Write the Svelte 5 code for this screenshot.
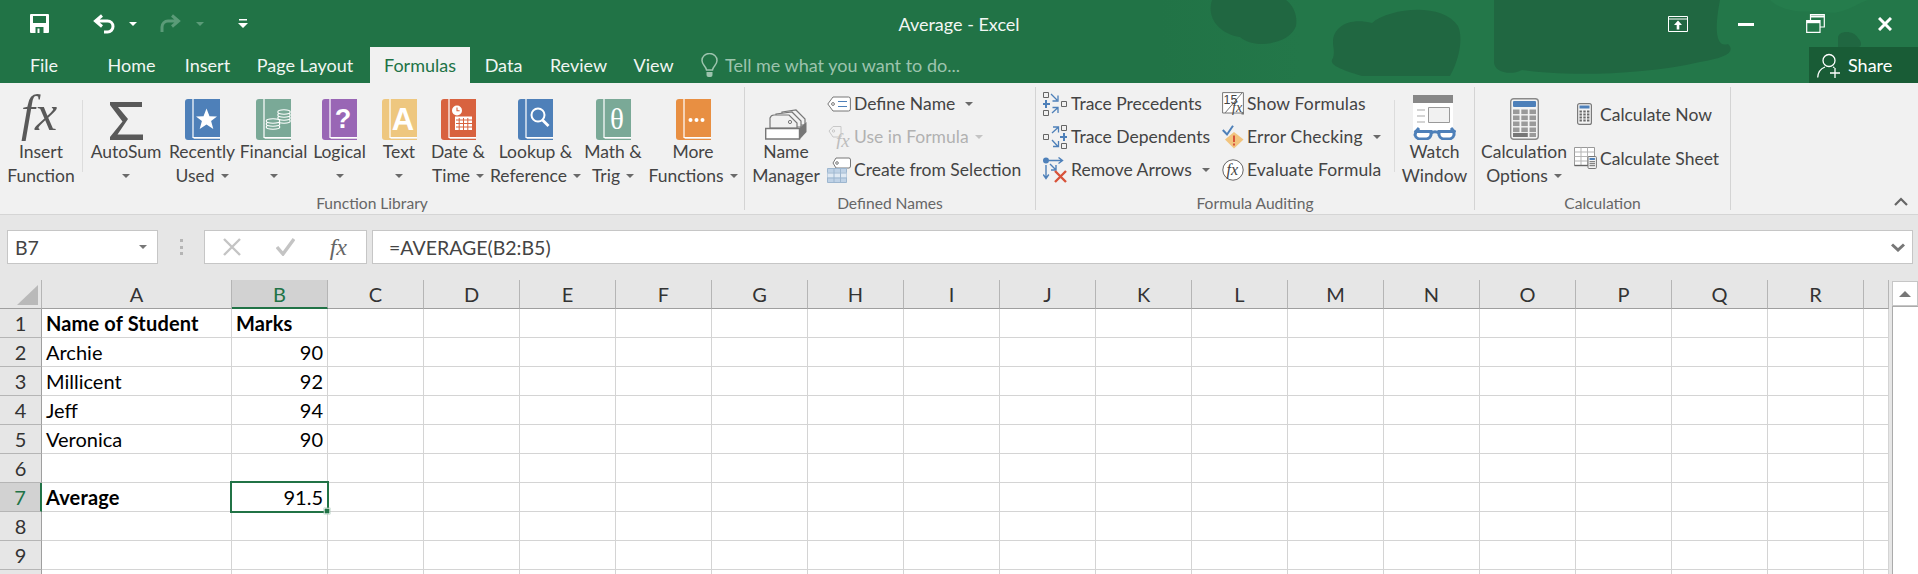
<script>
	const tabs = ['File', 'Home', 'Insert', 'Page Layout', 'Formulas', 'Data', 'Review', 'View'];

	const library = [
		{ top: 'AutoSum', bottom: '', icon: 'sum' },
		{ top: 'Recently', bottom: 'Used', icon: 'star', color: '#4e80b9' },
		{ top: 'Financial', bottom: '', icon: 'coins', color: '#7aa997' },
		{ top: 'Logical', bottom: '', icon: 'question', color: '#9966b5' },
		{ top: 'Text', bottom: '', icon: 'letter', color: '#eec77f' },
		{ top: 'Date &', bottom: 'Time', icon: 'date', color: '#d8623f' },
		{ top: 'Lookup &', bottom: 'Reference', icon: 'search', color: '#4e80b9' },
		{ top: 'Math &', bottom: 'Trig', icon: 'theta', color: '#7aa997' },
		{ top: 'More', bottom: 'Functions', icon: 'dots', color: '#e88f42' }
	];

	const columns = ['A', 'B', 'C', 'D', 'E', 'F', 'G', 'H', 'I', 'J', 'K', 'L', 'M', 'N', 'O', 'P', 'Q', 'R', ''];
	const rowNumbers = [1, 2, 3, 4, 5, 6, 7, 8, 9, 10];

	const cells = {
		A1: { text: 'Name of Student', bold: true },
		B1: { text: 'Marks', bold: true },
		A2: { text: 'Archie' },
		B2: { text: '90', right: true },
		A3: { text: 'Millicent' },
		B3: { text: '92', right: true },
		A4: { text: 'Jeff' },
		B4: { text: '94', right: true },
		A5: { text: 'Veronica' },
		B5: { text: '90', right: true },
		A7: { text: 'Average', bold: true },
		B7: { text: '91.5', right: true }
	};
</script>

{#snippet book(item)}
	<svg width="35" height="41" viewBox="0 0 35 41">
		<path d="M3 0H35V41H3Q0 41 0 38V3Q0 0 3 0Z" fill={item.color} />
		<path d="M8 0V38.5H35" fill="none" stroke="#fff" stroke-width="1.2" />
		<path d="M8.6 39.2H35V40H8.6Z" fill="#f1f1f1" />
		{#if item.icon === 'star'}
			<path d="M21.5 9.5L24.5 17.2L32 17.4L26.1 22.1L28.3 30L21.5 25.4L14.7 30L16.9 22.1L11 17.4L18.5 17.2Z" fill="#fff" />
		{:else if item.icon === 'coins'}
			<g fill={item.color} stroke="#fff" stroke-width="1.1">
				<ellipse cx="28" cy="22" rx="6.2" ry="2.2" />
				<ellipse cx="28" cy="19" rx="6.2" ry="2.2" />
				<ellipse cx="28" cy="16" rx="6.2" ry="2.2" />
				<ellipse cx="28" cy="13" rx="6.2" ry="2.2" />
				<ellipse cx="17" cy="28" rx="6.8" ry="2.2" />
				<ellipse cx="17" cy="25" rx="6.8" ry="2.2" />
				<ellipse cx="17" cy="22" rx="6.8" ry="2.2" />
			</g>
		{:else if item.icon === 'question'}
			<text x="21" y="29" class="glyph" font-size="27" font-weight="700" text-anchor="middle" fill="#fff">?</text>
		{:else if item.icon === 'letter'}
			<text x="21" y="31" class="glyph" font-size="31" font-weight="700" text-anchor="middle" fill="#fff">A</text>
		{:else if item.icon === 'date'}
			<circle cx="16" cy="11.5" r="5" fill="#fff" />
			<path d="M16 8.5V11.8H18.6" fill="none" stroke={item.color} stroke-width="1.1" />
			<path d="M14 17.5H31V31H14Z" fill="#fff" />
			<path d="M18.2 19V31M22.5 19V31M26.8 19V31M15 21H31M15 24.5H31M15 28H31" stroke={item.color} stroke-width="1" />
		{:else if item.icon === 'search'}
			<circle cx="20" cy="16" r="6.5" fill="none" stroke="#fff" stroke-width="2" />
			<path d="M24.5 21L30.5 27" stroke="#fff" stroke-width="2.8" />
		{:else if item.icon === 'theta'}
			<text x="21" y="30" class="serif" font-size="29" text-anchor="middle" fill="#fff">θ</text>
		{:else if item.icon === 'dots'}
			<circle cx="14.5" cy="21" r="2" fill="#fff" />
			<circle cx="20.5" cy="21" r="2" fill="#fff" />
			<circle cx="26.5" cy="21" r="2" fill="#fff" />
		{/if}
	</svg>
{/snippet}

<div class="excel">
	<header class="top">
		<svg class="backdrop" width="1918" height="83" viewBox="0 0 1918 83" aria-hidden="true">
			<defs>
				<linearGradient id="fade" x1="0" x2="1" y1="0" y2="0">
					<stop offset="0" stop-color="#237749" stop-opacity="0" />
					<stop offset="1" stop-color="#237749" stop-opacity="1" />
				</linearGradient>
			</defs>
			<rect x="1160" y="0" width="140" height="83" fill="url(#fade)" />
			<rect x="1300" y="0" width="618" height="83" fill="#237749" />
			<g fill="#206741">
				<path d="M1212 0C1206 18 1220 34 1240 37C1254 50 1290 44 1296 26C1298 14 1292 4 1286 0Z" />
				<path d="M1333 42C1333 26 1350 17 1372 23C1390 8 1442 2 1458 26C1464 40 1458 62 1450 76H1362C1350 72 1326 66 1333 58C1335 52 1333 48 1333 42Z" />
				<path d="M1494 0V62C1494 72 1510 76 1522 70C1560 76 1640 76 1700 62C1726 58 1736 52 1728 44C1716 48 1714 30 1720 0Z" />
				<path d="M1838 38C1838 30 1854 30 1858 38C1862 42 1862 47 1858 47H1838Z" />
			</g>
			<path d="M1770 0C1780 10 1800 14 1820 10C1840 20 1860 0 1870 0Z" fill="#257c4c" />
			<rect x="1300" y="76" width="618" height="7" fill="#237749" />
		</svg>

		<div class="titlebar">
			<div class="qat">
				<svg class="save" width="19" height="19" viewBox="0 0 19 19">
					<path d="M1 0H18Q19 0 19 1V18Q19 19 18 19H1Q0 19 0 18V1Q0 0 1 0Z" fill="#fff" />
					<path d="M3 2H16V9H3Z" fill="#217346" />
					<path d="M5.5 13H13.5V19H5.5Z" fill="#217346" />
					<path d="M7.5 14.5H9.5V19H7.5Z" fill="#fff" />
				</svg>
				<svg class="undo" width="22" height="20" viewBox="0 0 22 20">
					<path d="M9 1.5L2.5 7L9 12.5M3 7H14.5A5.5 5.5 0 0 1 14.5 18H11" fill="none" stroke="#fff" stroke-width="3" />
				</svg>
				<span class="qat-caret"></span>
				<svg class="redo" width="22" height="20" viewBox="0 0 22 20">
					<path d="M13 1.5L19.5 7L13 12.5M19 7H9A6 6 0 0 0 3 13V18" fill="none" stroke="#5b9b78" stroke-width="3" />
				</svg>
				<span class="qat-caret dim"></span>
				<svg class="customize" width="10" height="9" viewBox="0 0 10 9">
					<path d="M1 0H9V1.5H1ZM0 4H10L5 9Z" fill="#fff" />
				</svg>
			</div>
			<div class="title">Average - Excel</div>
			<div class="winctl">
				<svg width="20" height="16" viewBox="0 0 20 16">
					<path d="M.5 .5H19.5V15.5H.5ZM.5 3H19.5" fill="none" stroke="#fff" />
					<path d="M10 4.5L14 9H11.3V13.5H8.7V9H6Z" fill="#fff" />
				</svg>
				<svg class="minimize" width="16" height="3" viewBox="0 0 16 3"><rect width="16" height="3" fill="#fff" /></svg>
				<svg class="restore" width="19" height="19" viewBox="0 0 19 19">
					<path d="M4.5 6V.7H18.3V13H14" fill="none" stroke="#fff" stroke-width="1.2" />
					<path d="M4.5 2.5H18.3" stroke="#fff" stroke-width="2" />
					<path d="M.7 6.7H14V18.3H.7Z" fill="none" stroke="#fff" stroke-width="1.2" />
					<path d="M.7 8H14" stroke="#fff" stroke-width="2.4" />
				</svg>
				<svg class="close" width="14" height="14" viewBox="0 0 14 14">
					<path d="M1 1L13 13M13 1L1 13" stroke="#fff" stroke-width="3" />
				</svg>
			</div>
		</div>

		<nav class="tabs">
			<div class="tab-list">
				{#each tabs as tab}
					<span class="tab {tab === 'Formulas' ? 'active' : ''}">{tab}</span>
				{/each}
			</div>
			<div class="tell">
				<svg width="17" height="25" viewBox="0 0 17 25">
					<path d="M5.5 17C5 13 1 12 1 7.5A7.5 7 0 0 1 16 7.5C16 12 12 13 11.5 17Z" fill="none" stroke="#9dc4ae" stroke-width="1.5" />
					<path d="M5.5 19H11.5V22Q11.5 24 9.5 24H7.5Q5.5 24 5.5 22Z" fill="#9dc4ae" />
				</svg>
				<span>Tell me what you want to do...</span>
			</div>
			<div class="share">
				<svg width="24" height="25" viewBox="0 0 24 25">
					<circle cx="12" cy="7.5" r="6" fill="none" stroke="#fff" stroke-width="1.3" />
					<path d="M.7 24.5C1 19 4 15.5 8 14M16 14L17.5 14.7" fill="none" stroke="#fff" stroke-width="1.3" />
					<path d="M18 15V25M13 20H23" stroke="#fff" stroke-width="1.3" />
				</svg>
				<span>Share</span>
			</div>
		</nav>
	</header>

	<section class="ribbon">
		<div class="group library">
			<div class="group-body library-body">
				<div class="big">
					<div class="big-icon">
						<svg class="fx-icon" width="48" height="46" viewBox="0 0 48 46">
							<text x="4" y="36" class="serif italic" font-size="50" fill="#595959">fx</text>
						</svg>
					</div>
					<span class="label">Insert</span>
					<span class="label">Function</span>
				</div>
				<span class="short-sep"></span>
				{#each library as item}
					<div class="big">
						<div class="big-icon">
							{#if item.icon === 'sum'}
								<svg width="33" height="38" viewBox="0 0 33 38">
									<path d="M0 0H32V5H8L18 17L7.5 32.5H33V38H0V35L12.5 19.5L0 3Z" fill="#595959" />
								</svg>
							{:else}
								{@render book(item)}
							{/if}
						</div>
						<span class="label">{item.top}</span>
						<span class="label">{item.bottom}<i class="caret {item.bottom ? 'spaced' : ''}"></i></span>
					</div>
				{/each}
			</div>
			<div class="group-name">Function Library</div>
		</div>

		<div class="group names">
			<div class="group-body names-body">
				<div class="big">
					<div class="big-icon">
						<svg width="42" height="31" viewBox="0 0 42 31">
							<g fill="#f1f1f1" stroke="#777" stroke-width="1.2">
								<path d="M17 3L31 1L40 10V16H17Z" />
								<path d="M11 5L27 3L36 12V18H11Z" />
								<path d="M5 9Q6 6 9 6H24L32 14V19H5Z" />
							</g>
							<circle cx="25" cy="13" r="1.6" fill="none" stroke="#777" />
							<path d="M35 18.5L41.5 13V23L35 30Z" fill="#777" />
							<path d="M.7 19.5H34.5V30H.7Z" fill="#fff" stroke="#777" stroke-width="1.4" />
						</svg>
					</div>
					<span class="label">Name</span>
					<span class="label">Manager</span>
				</div>
				<div class="small-stack">
					<div class="small">
						<svg class="slot" width="24" height="16" viewBox="0 0 24 16">
							<path d="M.8 8L6 1H21.5Q23.4 1 23.4 3V13Q23.4 15 21.5 15H6Z" fill="#fff" stroke="#777" />
							<circle cx="6" cy="8" r="1.4" fill="none" stroke="#777" />
							<path d="M11 5.5H20M11 10.5H20" stroke="#4e80b9" stroke-width="1.2" />
						</svg>
						<span class="label">Define Name</span>
						<i class="caret far"></i>
					</div>
					<div class="small disabled">
						<svg class="slot" width="24" height="24" viewBox="0 0 24 24">
							<path d="M2 6L6 1.5H14V12H6Z" fill="none" stroke="#c8c8c8" />
							<circle cx="6.5" cy="6" r="1.2" fill="none" stroke="#c8c8c8" />
							<text x="9" y="22" class="serif italic" font-size="19" fill="#bdbdbd">fx</text>
						</svg>
						<span class="label">Use in Formula</span>
						<i class="caret dim-caret"></i>
					</div>
					<div class="small">
						<svg class="slot" width="24" height="26" viewBox="0 0 24 26">
							<path d="M6 6L9 1H22Q23.5 1 23.5 3V9Q23.5 11 22 11H9Z" fill="#fff" stroke="#777" />
							<circle cx="10" cy="6" r="1.3" fill="none" stroke="#777" />
							<path d="M.5 11.5H19.5V25.5H.5Z" fill="#bfd2e6" stroke="#9db6cf" />
							<path d="M.5 15.5H19.5V20.5H.5Z" fill="#dfe9f3" />
							<path d="M7 11.5V25.5M13.5 11.5V25.5M.5 16H19.5M.5 21H19.5" stroke="#9db6cf" />
						</svg>
						<span class="label">Create from Selection</span>
					</div>
				</div>
			</div>
			<div class="group-name">Defined Names</div>
		</div>

		<div class="group auditing">
			<div class="group-body auditing-body">
				<div class="small-stack trace">
					<div class="small">
						<svg class="slot" width="24" height="24" viewBox="0 0 24 24">
							<g fill="none" stroke="#666"><path d="M.5 .5H5.5V5.5H.5ZM.5 18.5H5.5V23.5H.5ZM18.5 9.5H23.5V14.5H18.5Z" /></g>
							<path d="M3 8V16M-.5 12H7" stroke="#4e80b9" stroke-width="2" />
							<path d="M8 2L14 8M15 3.5V9H9.5M9 21L14.5 16M9.5 15.5H15V21" fill="none" stroke="#4e80b9" stroke-width="1.3" />
						</svg>
						<span class="label">Trace Precedents</span>
					</div>
					<div class="small">
						<svg class="slot" width="24" height="24" viewBox="0 0 24 24">
							<g fill="none" stroke="#666"><path d="M.5 9.5H5.5V14.5H.5ZM18.5 .5H23.5V5.5H18.5ZM18.5 18.5H23.5V23.5H18.5Z" /></g>
							<path d="M21 8V16M17 12H24.5" stroke="#4e80b9" stroke-width="2" />
							<path d="M9 8L15 2.5M10 2H15.5V7.5M9 15L14.5 21M15.5 16V21.5H10" fill="none" stroke="#4e80b9" stroke-width="1.3" />
						</svg>
						<span class="label">Trace Dependents</span>
					</div>
					<div class="small">
						<svg class="slot" width="24" height="26" viewBox="0 0 24 26">
							<circle cx="3" cy="3.5" r="3" fill="#4e80b9" />
							<path d="M6 3.5H19M15.5 .5L19.5 3.5L15.5 6.5M3 8V21M.2 17.5L3 21.5L5.8 17.5M7 7L13 13M8 13H13V8" fill="none" stroke="#4e80b9" stroke-width="1.4" />
							<path d="M12 14L23 25M23 14L12 25" stroke="#d8533a" stroke-width="2.4" />
						</svg>
						<span class="label">Remove Arrows</span>
						<i class="caret far"></i>
					</div>
				</div>
				<div class="small-stack checks">
					<div class="small">
						<svg class="slot" width="22" height="24" viewBox="0 0 22 24">
							<path d="M.6 .6H21.4V21H.6Z" fill="#fff" stroke="#777" />
							<path d="M3 21L20 1" stroke="#777" />
							<text x="1.5" y="11.5" class="glyph" font-size="12.5" fill="#444">15</text>
							<text x="10" y="20" class="serif italic" font-size="14" fill="#444">fx</text>
							<rect x="19.5" y="20" width="2.5" height="2.5" fill="#777" />
						</svg>
						<span class="label">Show Formulas</span>
					</div>
					<div class="small">
						<svg class="slot" width="22" height="24" viewBox="0 0 22 24">
							<path d="M12 7L21.5 14.5L12 23.5L3 14.5Z" fill="#f2c47e" />
							<path d="M.8 5L5 9.5L11 .8" fill="none" stroke="#4e80b9" stroke-width="2" />
							<path d="M12 10.5V17" stroke="#d8533a" stroke-width="2" />
							<path d="M12 18.4V20.4" stroke="#d8533a" stroke-width="2" />
						</svg>
						<span class="label">Error Checking</span>
						<i class="caret far"></i>
					</div>
					<div class="small">
						<svg class="slot" width="22" height="22" viewBox="0 0 22 22">
							<circle cx="11" cy="11" r="10.2" fill="#fff" stroke="#666" />
							<text x="4.5" y="16" class="serif italic" font-size="16" fill="#444">fx</text>
						</svg>
						<span class="label">Evaluate Formula</span>
					</div>
				</div>
				<span class="short-sep"></span>
				<div class="big">
					<div class="big-icon">
						<svg width="44" height="45" viewBox="0 0 44 45">
							<path d="M0 8H40V36H0Z" fill="#fff" />
							<path d="M0 0H40V8H0Z" fill="#878787" />
							<path d="M15.5 12.5H36.5V27.5H15.5Z" fill="#f1f1f1" stroke="#999" />
							<path d="M4 15H12M4 21H12M4 27H12" stroke="#aaa" stroke-width="1.2" />
							<path d="M6 33L2 37.5M38 33L42 37.5" stroke="#4e80b9" stroke-width="3" />
							<path d="M3 36.5H18V40Q17 44 11.5 44H8Q3 44 2 40ZM26 36.5H41V40Q40 44 35 44H32Q27 44 26 40Z" fill="#fff" stroke="#4e80b9" stroke-width="3" />
							<path d="M18 38Q22 35.5 26 38" fill="none" stroke="#4e80b9" stroke-width="3" />
						</svg>
					</div>
					<span class="label">Watch</span>
					<span class="label">Window</span>
				</div>
			</div>
			<div class="group-name">Formula Auditing</div>
		</div>

		<div class="group calculation">
			<div class="group-body calculation-body">
				<div class="big">
					<div class="big-icon">
						<svg width="29" height="42" viewBox="0 0 29 42">
							<rect x=".7" y=".7" width="27.6" height="40.6" rx="3" fill="#f3f3f3" stroke="#8a8a8a" stroke-width="1.4" />
							<rect x="3" y="3" width="23" height="6" rx="1" fill="#4e80b9" />
							<g fill="#9a9a9a">
								{#each [11.5, 17.5, 23.5, 29.5] as y}
									<rect x="3" {y} width="6.5" height="4.6" />
									<rect x="11.3" {y} width="6.5" height="4.6" />
									<rect x="19.5" {y} width="6.5" height="4.6" />
								{/each}
								<rect x="3" y="35" width="14.8" height="4" fill="#777" />
								<rect x="19.5" y="35" width="6.5" height="4" />
							</g>
						</svg>
					</div>
					<span class="label">Calculation</span>
					<span class="label">Options<i class="caret spaced"></i></span>
				</div>
				<div class="small-stack calc-stack">
					<div class="small">
						<svg class="slot" width="15" height="22" viewBox="0 0 15 22">
							<rect x=".6" y=".6" width="13.8" height="20.8" rx="2" fill="#f3f3f3" stroke="#7a7a7a" stroke-width="1.2" />
							<rect x="2.5" y="2.5" width="10" height="3" fill="#4e80b9" />
							<g fill="#6a6a6a">
								{#each [7.5, 10.5, 13.5, 16.5] as y}
									<rect x="2.5" {y} width="2.4" height="2" />
									<rect x="6.3" {y} width="2.4" height="2" />
									<rect x="10" {y} width="2.4" height="2" />
								{/each}
							</g>
						</svg>
						<span class="label">Calculate Now</span>
					</div>
					<div class="small">
						<svg class="slot" width="23" height="22" viewBox="0 0 23 22">
							<path d="M.5 .5H20.5V18.5H.5Z" fill="#fff" stroke="#999" />
							<path d="M7 .5V18.5M13.5 .5V18.5M.5 5H20.5M.5 9.5H20.5M.5 14H20.5" stroke="#b5b5b5" />
							<path d="M.5 18.5H14" stroke="#666" stroke-width="1.4" />
							<rect x="14" y="9.5" width="8.4" height="12" rx="1" fill="#f3f3f3" stroke="#777" />
							<rect x="15.5" y="11" width="5.4" height="2" fill="#4e80b9" />
							<path d="M15.5 14.7H21M15.5 16.7H21M15.5 18.7H21" stroke="#6a6a6a" />
						</svg>
						<span class="label">Calculate Sheet</span>
					</div>
				</div>
			</div>
			<div class="group-name">Calculation</div>
		</div>

		<svg class="collapse" width="14" height="9" viewBox="0 0 14 9">
			<path d="M1 8L7 2L13 8" fill="none" stroke="#666" stroke-width="2.2" />
		</svg>
	</section>

	<section class="formula-bar">
		<div class="name-box">
			<span>B7</span>
			<span class="name-caret"></span>
		</div>
		<div class="grip"><i></i><i></i><i></i></div>
		<div class="fx-buttons">
			<svg width="18" height="18" viewBox="0 0 18 18"><path d="M1 1L17 17M17 1L1 17" stroke="#c4c4c4" stroke-width="2.4" /></svg>
			<svg width="19" height="18" viewBox="0 0 19 18"><path d="M1 9L7 16L18 1" fill="none" stroke="#c4c4c4" stroke-width="3.4" /></svg>
			<span class="fx-small">fx</span>
		</div>
		<div class="formula-input">
			<span>=AVERAGE(B2:B5)</span>
			<svg width="14" height="9" viewBox="0 0 14 9"><path d="M1 1.5L7 7L13 1.5" fill="none" stroke="#777" stroke-width="3" /></svg>
		</div>
	</section>

	<section class="workspace">
		<div class="sheet">
			<div class="col-head corner"><span class="triangle"></span></div>
			{#each columns as col}
				<div class="col-head {col === 'B' ? 'selected' : ''}">{col}</div>
			{/each}
			{#each rowNumbers as row}
				<div class="row-head {row === 7 ? 'selected' : ''}">{row}</div>
				{#each columns as col}
					{@const cell = cells[col + row]}
					<div class="cell {cell?.bold ? 'bold' : ''} {cell?.right ? 'right' : ''} {col + row === 'B7' ? 'current' : ''}">
						{cell?.text ?? ''}
					</div>
				{/each}
			{/each}
		</div>
		<div class="scrollbar">
			<div class="scroll-up"><span></span></div>
			<div class="scroll-track"></div>
		</div>
	</section>
</div>

<style>
	:global(body) {
		margin: 0;
	}
	.excel {
		width: 1918px;
		height: 574px;
		overflow: hidden;
		display: flex;
		flex-direction: column;
		background: #e6e6e6;
		font-family: Lato, 'Open Sans', sans-serif;
		color: #444;
	}
	.glyph {
		font-family: 'Liberation Sans', sans-serif;
	}
	.serif {
		font-family: 'Liberation Serif', serif;
	}
	.italic {
		font-style: italic;
	}

	/* title bar and tabs */
	.top {
		position: relative;
		height: 83px;
		flex: none;
		background: #217346;
		color: #fff;
	}
	.backdrop {
		position: absolute;
		top: 0;
		left: 0;
	}
	.titlebar {
		position: relative;
		height: 47px;
		display: grid;
		grid-template-columns: 1fr auto 1fr;
		align-items: center;
	}
	.qat {
		display: flex;
		align-items: center;
		padding-left: 30px;
	}
	.undo {
		margin-left: 44px;
	}
	.qat-caret {
		width: 0;
		height: 0;
		margin-left: 14px;
		border-left: 4px solid transparent;
		border-right: 4px solid transparent;
		border-top: 4px solid #fff;
	}
	.qat-caret.dim {
		margin-left: 15px;
		border-top-color: #5b9b78;
	}
	.redo {
		margin-left: 22px;
	}
	.customize {
		margin-left: 34px;
	}
	.title {
		font-size: 18px;
		color: #f2f7f4;
	}
	.winctl {
		display: flex;
		align-items: center;
		justify-self: end;
		padding-right: 26px;
	}
	.minimize {
		margin-left: 50px;
		margin-top: 2px;
	}
	.restore {
		margin-left: 52px;
	}
	.close {
		margin-left: 53px;
	}
	.tabs {
		position: relative;
		height: 36px;
		display: flex;
		font-size: 18px;
	}
	.tab-list {
		display: grid;
		grid-template-columns: 88px 87px 65px 130px 100px 67px 83px 67px;
	}
	.tab {
		display: flex;
		align-items: center;
		justify-content: center;
		color: #f1f6f3;
	}
	.tab.active {
		background: #f1f1f1;
		color: #217346;
	}
	.tell {
		display: flex;
		align-items: center;
		gap: 7px;
		margin-left: 14px;
		color: #9dc4ae;
	}
	.share {
		display: flex;
		align-items: center;
		gap: 7px;
		width: 109px;
		box-sizing: border-box;
		padding-left: 8px;
		margin-left: auto;
		background: #195c36;
	}

	/* ribbon */
	.ribbon {
		height: 132px;
		flex: none;
		box-sizing: border-box;
		display: flex;
		padding-top: 4px;
		background: #f1f1f1;
		border-bottom: 1px solid #d5d5d5;
	}
	.group {
		height: 123px;
		box-sizing: border-box;
		border-right: 1px solid #d4d4d4;
		flex: none;
	}
	.library {
		width: 745px;
	}
	.names {
		width: 291px;
	}
	.auditing {
		width: 439px;
	}
	.calculation {
		width: 256px;
	}
	.group-body {
		height: 108px;
	}
	.group-name {
		height: 15px;
		line-height: 16px;
		text-align: center;
		font-size: 15.6px;
		color: #666;
	}
	.library-body {
		display: grid;
		grid-template-columns: 82px 8px 72px 80px 63px 69px 50px 68px 87px 68px 92px;
	}
	.names-body {
		display: grid;
		grid-template-columns: 82px 1fr;
	}
	.auditing-body {
		display: grid;
		grid-template-columns: 179px 172px 1px 79px;
		padding-left: 7px;
	}
	.calculation-body {
		display: grid;
		grid-template-columns: 98px 1fr;
	}
	.big {
		display: flex;
		flex-direction: column;
		align-items: center;
		min-width: 0;
	}
	.big-icon {
		height: 53px;
		display: flex;
		align-items: flex-end;
		justify-content: center;
		flex: none;
	}
	.fx-icon {
		overflow: visible;
	}
	.big .label {
		height: 24px;
		line-height: 24px;
		flex: none;
	}
	.label {
		font-size: 17.5px;
		white-space: nowrap;
		display: inline-flex;
		align-items: center;
		color: #444;
	}
	.checks .label {
		letter-spacing: 0.15px;
	}
	.caret {
		display: inline-block;
		width: 0;
		height: 0;
		border-left: 4px solid transparent;
		border-right: 4px solid transparent;
		border-top: 4px solid #6a6a6a;
	}
	.caret.spaced {
		margin-left: 6px;
	}
	.caret.far {
		margin-left: 10px;
	}
	.caret.dim-caret {
		margin-left: 6px;
		border-top-color: #c4c4c4;
	}
	.short-sep {
		display: block;
		width: 1px;
		height: 72px;
		margin-top: 13px;
		background: #dcdcdc;
	}
	.small-stack {
		display: flex;
		flex-direction: column;
	}
	.small {
		height: 33px;
		display: flex;
		align-items: center;
	}
	.slot {
		flex: none;
		margin-right: 3px;
	}
	.small.disabled .label {
		color: #b1b1b1;
	}
	.trace .slot {
		margin-right: 4px;
	}
	.checks .slot {
		margin-right: 3px;
	}
	.calc-stack {
		padding-top: 5px;
	}
	.calc-stack .small {
		height: 44px;
	}
	.calc-stack .slot {
		margin-left: 4px;
		margin-right: 8px;
	}
	.calc-stack .small + .small .slot {
		margin-left: 1px;
		margin-right: 3px;
	}
	.collapse {
		margin: 110px 0 0 163px;
		flex: none;
	}

	/* formula bar */
	.formula-bar {
		height: 65px;
		flex: none;
		box-sizing: border-box;
		display: flex;
		padding: 15px 5px 16px 7px;
		font-size: 19.5px;
		color: #444;
	}
	.name-box {
		width: 151px;
		box-sizing: border-box;
		display: flex;
		align-items: center;
		justify-content: space-between;
		padding: 0 10px 0 7px;
		background: #fff;
		border: 1px solid #c6c6c6;
	}
	.name-caret {
		width: 0;
		height: 0;
		border-left: 4px solid transparent;
		border-right: 4px solid transparent;
		border-top: 4px solid #777;
	}
	.grip {
		width: 46px;
		display: flex;
		flex-direction: column;
		align-items: center;
		justify-content: center;
		gap: 3.5px;
		flex: none;
	}
	.grip i {
		width: 3px;
		height: 3px;
		background: #b5b5b5;
	}
	.fx-buttons {
		width: 163px;
		box-sizing: border-box;
		display: flex;
		align-items: center;
		justify-content: space-between;
		padding: 0 19px 0 18px;
		background: #fff;
		border: 1px solid #c6c6c6;
		flex: none;
	}
	.fx-small {
		font-family: 'Liberation Serif', serif;
		font-style: italic;
		font-size: 24px;
		color: #666;
	}
	.formula-input {
		flex: 1;
		margin-left: 5px;
		display: flex;
		align-items: center;
		justify-content: space-between;
		padding: 0 7px 0 16px;
		background: #fff;
		border: 1px solid #c6c6c6;
	}

	/* worksheet */
	.workspace {
		flex: 1;
		min-height: 0;
		display: flex;
	}
	.sheet {
		display: grid;
		grid-template-columns: 42px 190px repeat(17, 96px) 25px;
		grid-auto-rows: 29px;
		width: 1889px;
		flex: none;
		font-size: 20px;
		border-right: 1px solid #a6a6a6;
		box-sizing: border-box;
		align-content: start;
	}
	.col-head {
		display: flex;
		align-items: center;
		justify-content: center;
		box-sizing: border-box;
		background: #e6e6e6;
		border-right: 1px solid #b5b5b5;
		border-bottom: 1px solid #9f9f9f;
		color: #333;
	}
	.col-head:last-of-type {
		border-right: none;
	}
	.col-head.selected {
		background: #d2d2d2;
		color: #217346;
		border-bottom: 2px solid #217346;
	}
	.corner {
		position: relative;
	}
	.triangle {
		position: absolute;
		right: 3px;
		bottom: 3px;
		width: 0;
		height: 0;
		border-left: 21px solid transparent;
		border-bottom: 20px solid #b9b9b9;
	}
	.row-head {
		display: flex;
		align-items: center;
		justify-content: center;
		box-sizing: border-box;
		background: #e6e6e6;
		border-right: 1px solid #9f9f9f;
		border-bottom: 1px solid #b5b5b5;
		color: #333;
	}
	.row-head.selected {
		background: #d2d2d2;
		color: #217346;
		border-right: 2px solid #217346;
	}
	.cell {
		box-sizing: border-box;
		display: flex;
		align-items: center;
		padding: 0 4px 0 4px;
		background: #fff;
		border-right: 1px solid #d4d4d4;
		border-bottom: 1px solid #d4d4d4;
		color: #000;
		white-space: nowrap;
	}
	.cell.bold {
		font-weight: 700;
		letter-spacing: 0.15px;
	}
	.cell.right {
		justify-content: flex-end;
	}
	.cell.current {
		position: relative;
		z-index: 1;
	}
	.cell.current::before {
		content: '';
		position: absolute;
		inset: -2px;
		border: 2px solid #217346;
	}
	.cell.current::after {
		content: '';
		position: absolute;
		right: -4px;
		bottom: -4px;
		width: 6px;
		height: 6px;
		background: #217346;
		border: 1px solid #fff;
		box-sizing: content-box;
		transform: scale(0.8);
	}
	.scrollbar {
		width: 26px;
		margin-left: 3px;
		display: flex;
		flex-direction: column;
		padding-top: 1px;
		flex: none;
		box-sizing: border-box;
	}
	.scroll-up {
		height: 25px;
		box-sizing: border-box;
		display: flex;
		align-items: center;
		justify-content: center;
		background: #fff;
		border: 1px solid #c6c6c6;
	}
	.scroll-up span {
		width: 0;
		height: 0;
		border-left: 6px solid transparent;
		border-right: 6px solid transparent;
		border-bottom: 6px solid #777;
	}
	.scroll-track {
		flex: 1;
		background: #fff;
		border-left: 1px solid #ababab;
		border-top: 1px solid #ababab;
	}
</style>
